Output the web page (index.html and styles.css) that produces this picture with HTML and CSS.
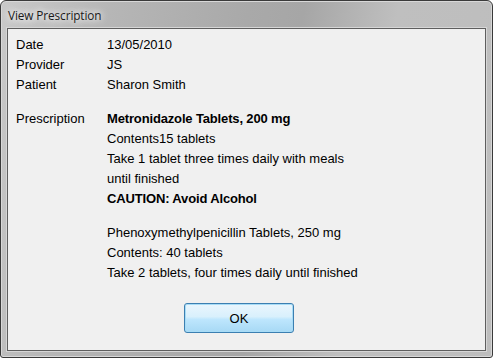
FILE: index.html
```html
<!DOCTYPE html>
<html>
<head>
<meta charset="utf-8">
<link rel="stylesheet" href="styles.css">
</head>
<body>
<div class="window">
  <div class="titlebar"><span class="title">View Prescription</span></div>
  <div class="panel">
    <div class="grid">
      <div class="label">Date</div><div class="value">13/05/2010</div>
      <div class="label">Provider</div><div class="value">JS</div>
      <div class="label">Patient</div><div class="value">Sharon Smith</div>
      <div class="label spaced">Prescription</div>
      <div class="value spaced">
        <div class="bold">Metronidazole Tablets, 200 mg</div>
        <div>Contents15 tablets</div>
        <div>Take 1 tablet three times daily with meals</div>
        <div>until finished</div>
        <div class="bold">CAUTION: Avoid Alcohol</div>
        <div class="group">Phenoxymethylpenicillin Tablets, 250 mg</div>
        <div>Contents: 40 tablets</div>
        <div>Take 2 tablets, four times daily until finished</div>
      </div>
    </div>
    <div class="actions"><button class="ok">OK</button></div>
  </div>
</div>
</body>
</html>
```
FILE: styles.css
```css
html, body {
  margin: 0;
  padding: 0;
  background: #ffffff;
}
.window {
  box-sizing: border-box;
  width: 493px;
  height: 358px;
  border: 1px solid #3a3a3a;
  border-radius: 6px 6px 3px 3px;
  background: linear-gradient(100deg, #c9c9c9 0%, #b6b6b6 20%, #a9a9a9 45%, #a6a6a6 55%, #bfbfbf 72%, #bdbdbd 100%);
  padding: 0 6px 6px 6px;
  display: flex;
  flex-direction: column;
  box-shadow: inset 0 0 0 1px #d8d8d8;
}
.titlebar {
  height: 27px;
  display: flex;
  align-items: center;
  padding-left: 1px;
}
.title {
  font-family: "Open Sans", "DejaVu Sans", sans-serif;
  font-size: 11.8px;
  color: #1a1a1a;
  text-shadow: 0 0 6px #ffffff, 0 0 10px #ffffff;
  letter-spacing: -0.1px;
}
.panel {
  flex: 1;
  border: 1px solid #5e5e5e;
  background: #f0f0f0;
  padding: 6px 8px 0 8px;
  font-family: "Liberation Sans", Arial, sans-serif;
  font-size: 13px;
  line-height: 20px;
  color: #000;
  box-shadow: 0 0 0 1px #d6d6d6;
}
.grid {
  display: grid;
  grid-template-columns: 91px auto;
}
.spaced {
  margin-top: 14px;
}
.bold {
  font-weight: bold;
  letter-spacing: -0.15px;
}
.group {
  margin-top: 14px;
}
.actions {
  margin-top: 20px;
  padding-left: 168px;
}
.ok {
  box-sizing: border-box;
  width: 110px;
  height: 30px;
  border: 1px solid #3c7fb1;
  border-radius: 3px;
  background: linear-gradient(to bottom, #eaf6fd 0%, #d9f0fc 45%, #bee6fd 55%, #a7d9f5 100%);
  box-shadow: inset 0 0 0 1px #a8dcf6;
  font-family: "Liberation Sans", Arial, sans-serif;
  font-size: 13px;
  color: #000;
  padding: 0;
}
```
